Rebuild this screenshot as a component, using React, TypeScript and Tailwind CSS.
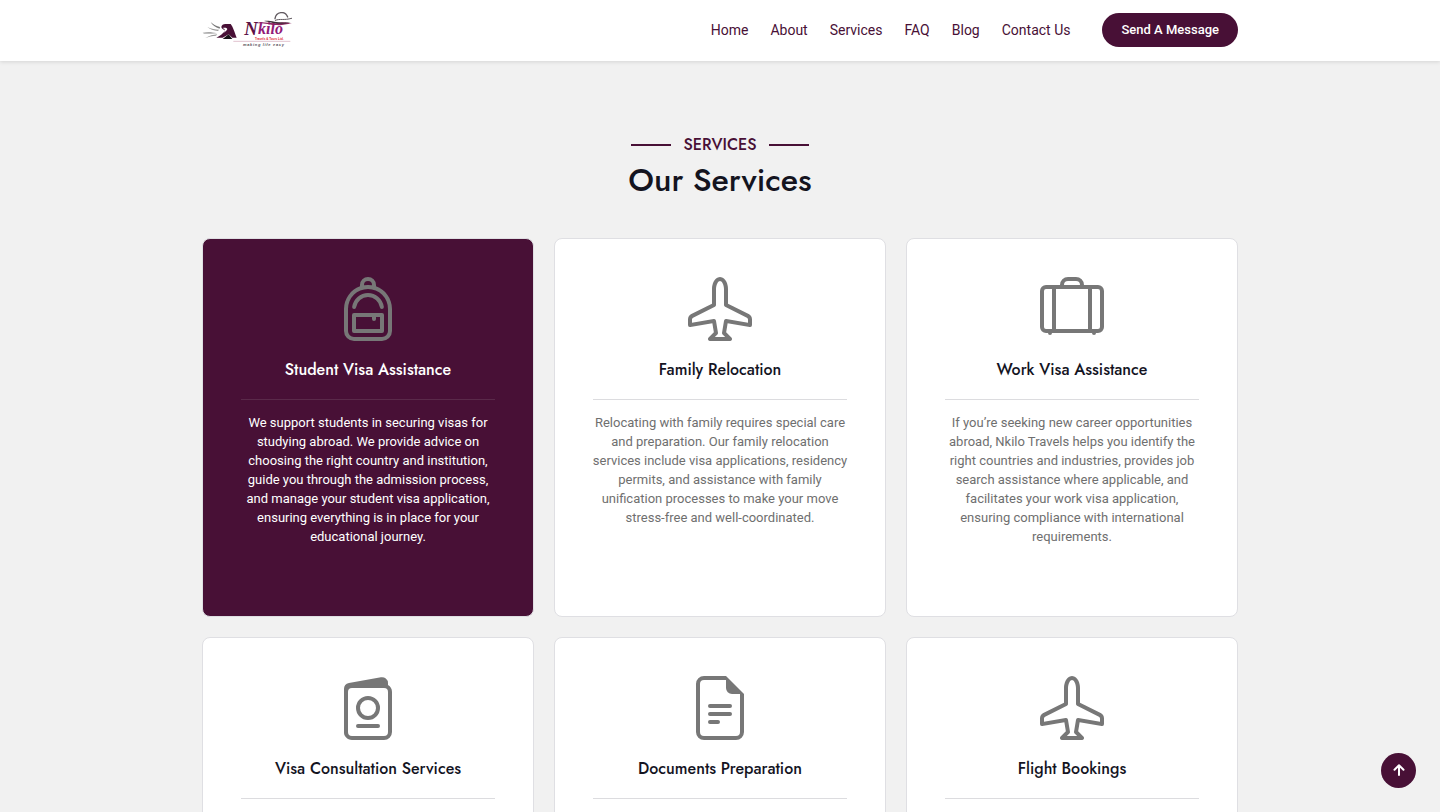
import type { IconType } from "react-icons";
import { BsAirplane, BsBackpack, BsFileEarmarkText, BsPassport, BsSuitcaseLg } from "react-icons/bs";

type Service = { title: string; text: string; icon: IconType; featured?: boolean };

const links = ["Home", "About", "Services", "FAQ", "Blog", "Contact Us"];

const services: Service[] = [
  {
    title: "Student Visa Assistance",
    text: "We support students in securing visas for studying abroad. We provide advice on choosing the right country and institution, guide you through the admission process, and manage your student visa application, ensuring everything is in place for your educational journey.",
    icon: BsBackpack,
    featured: true,
  },
  {
    title: "Family Relocation",
    text: "Relocating with family requires special care and preparation. Our family relocation services include visa applications, residency permits, and assistance with family unification processes to make your move stress-free and well-coordinated.",
    icon: BsAirplane,
  },
  {
    title: "Work Visa Assistance",
    text: "If you’re seeking new career opportunities abroad, Nkilo Travels helps you identify the right countries and industries, provides job search assistance where applicable, and facilitates your work visa application, ensuring compliance with international requirements.",
    icon: BsSuitcaseLg,
  },
  { title: "Visa Consultation Services", text: "", icon: BsPassport },
  { title: "Documents Preparation", text: "", icon: BsFileEarmarkText },
  { title: "Flight Bookings", text: "", icon: BsAirplane },
];

function Logo() {
  return (
    <svg viewBox="18 24 270 108" className="h-9 w-[90px]" role="img" aria-label="Nkilo Travels & Tours Ltd">
      <path d="M44 54 C52 62 62 67 72 69 L71 74 C58 70 49 64 44 54Z" fill="#777" />
      <path d="M34 69 C46 75 58 77 69 77 L66 81 C53 80 42 76 34 69Z" fill="#999" />
      <path d="M20 86 C36 82 50 84 63 88 L48 89 L24 89Z" fill="#aaa" />
      <path d="M28 102 C40 95 52 92 64 91 L60 95 C48 96 38 98 28 102Z" fill="#999" />
      <path d="M61 101 C72 96 80 88 88 80 C82 76 76 74 76 69 C77 62 83 59 91 60 L104 60 C111 68 116 86 122 101 L109 101 L98 91 L80 101Z" fill="#481036" />
      <path d="M80 72 C87 70 92 71 94 75 C92 80 88 83 84 87 C88 80 88 75 80 72Z" fill="#fff" />
      <path d="M80 105 L98 91 L109 105Z" fill="#171217" />
      <text x="145" y="94" fontFamily="'Liberation Serif', serif" fontStyle="italic" fontWeight="700" fontSize="56" fill="#5c1245">N</text>
      <text x="186" y="91" fontFamily="'Liberation Serif', serif" fontStyle="italic" fontWeight="700" fontSize="48" fill="#911a78">kilo</text>
      <path d="M180 58 C202 50 217 60 244 57 C263 52 272 55 288 59 C268 59 260 65 239 63 C216 62 206 56 180 58Z" fill="#8c2461" />
      <path d="M204 51 C227 48 243 60 284 55 C255 64 236 58 204 51Z" fill="#3d3038" />
      <path d="M237 44 C240 24 267 18 275 39" fill="none" stroke="#615a60" strokeWidth="4" strokeLinecap="round" />
      <path d="M238 49 C253 43 262 50 287 43" fill="none" stroke="#615a60" strokeWidth="3" strokeLinecap="round" />
      <text x="177" y="109" fontFamily="'Liberation Sans', sans-serif" fontWeight="700" fontSize="9" fill="#df2434">Travels &amp; Tours Ltd.</text>
      <path d="M112 112 H283" stroke="#a2466d" strokeWidth="1" />
      <text x="141" y="126" fontFamily="'Liberation Sans', sans-serif" fontStyle="italic" fontWeight="700" fontSize="12" letterSpacing="2" fill="#55505a">making life easy</text>
    </svg>
  );
}

function ServiceCard({ title, text, icon: Icon, featured }: Service) {
  return (
    <article
      className={`flex min-h-[379px] flex-col rounded-lg border border-[#dfdfe3] px-9 pt-[38px] pb-10 text-center ${
        featured ? "bg-[#481036] text-white" : "bg-white text-[#14141f]"
      }`}
    >
      <Icon className="mx-auto size-16 shrink-0 text-[#777777]" aria-hidden="true" />
      <h3 className="mt-[17px] font-['Jost',sans-serif] text-base leading-6 font-medium">{title}</h3>
      <hr className={`mx-0.5 mt-[17px] ${featured ? "border-[#5a2a4a]" : "border-[#dcdcdf]"}`} />
      <p className={`mt-[13px] text-[13px] leading-[19px] ${featured ? "text-white" : "text-[#6f6f6f]"}`}>{text}</p>
    </article>
  );
}

export default function App() {
  return (
    <div className="h-screen overflow-hidden bg-[#f1f1f1] font-['Roboto',sans-serif]">
      <header className="relative bg-white pb-px shadow-[0_1px_4px_rgba(0,0,0,0.12)]">
        <div className="mx-auto flex h-[60px] max-w-[1036px] items-center justify-between">
          <a href="#home">
            <Logo />
          </a>
          <div className="flex items-center gap-8">
            <nav className="flex gap-[22px] text-sm text-[#481036]">
              {links.map((link) => (
                <a key={link} href={`#${link.toLowerCase().replace(" ", "-")}`}>
                  {link}
                </a>
              ))}
            </nav>
            <button type="button" className="h-[34px] rounded-full bg-[#481036] px-[19px] text-[13px] font-medium text-white">
              Send A Message
            </button>
          </div>
        </div>
      </header>

      <main className="mx-auto max-w-[1036px] pt-[72px]">
        <div className="flex flex-col items-center font-['Jost',sans-serif]">
          <p className="flex items-center gap-[13px] text-base leading-6 font-medium text-[#481036]">
            <span className="h-0.5 w-10 bg-[#481036]" />
            SERVICES
            <span className="h-0.5 w-10 bg-[#481036]" />
          </p>
          <h1 className="mt-[3px] text-[32px] leading-10 font-medium text-[#14141f]">Our Services</h1>
        </div>
        <section className="mt-[38px] grid grid-cols-3 gap-5" aria-label="Our Services">
          {services.map((service) => (
            <ServiceCard key={service.title} {...service} />
          ))}
        </section>
      </main>

      <a
        href="#home"
        aria-label="Back to top"
        className="fixed right-6 bottom-6 flex size-[35px] items-center justify-center rounded-full bg-[#481036] text-white"
      >
        <svg viewBox="0 0 14 14" className="size-[14px]" fill="none" stroke="currentColor" strokeWidth="2" strokeLinecap="round" strokeLinejoin="round" aria-hidden="true">
          <path d="M7 11V1.5M2.5 5.7 7 1.3l4.5 4.4" />
        </svg>
      </a>
    </div>
  );
}
